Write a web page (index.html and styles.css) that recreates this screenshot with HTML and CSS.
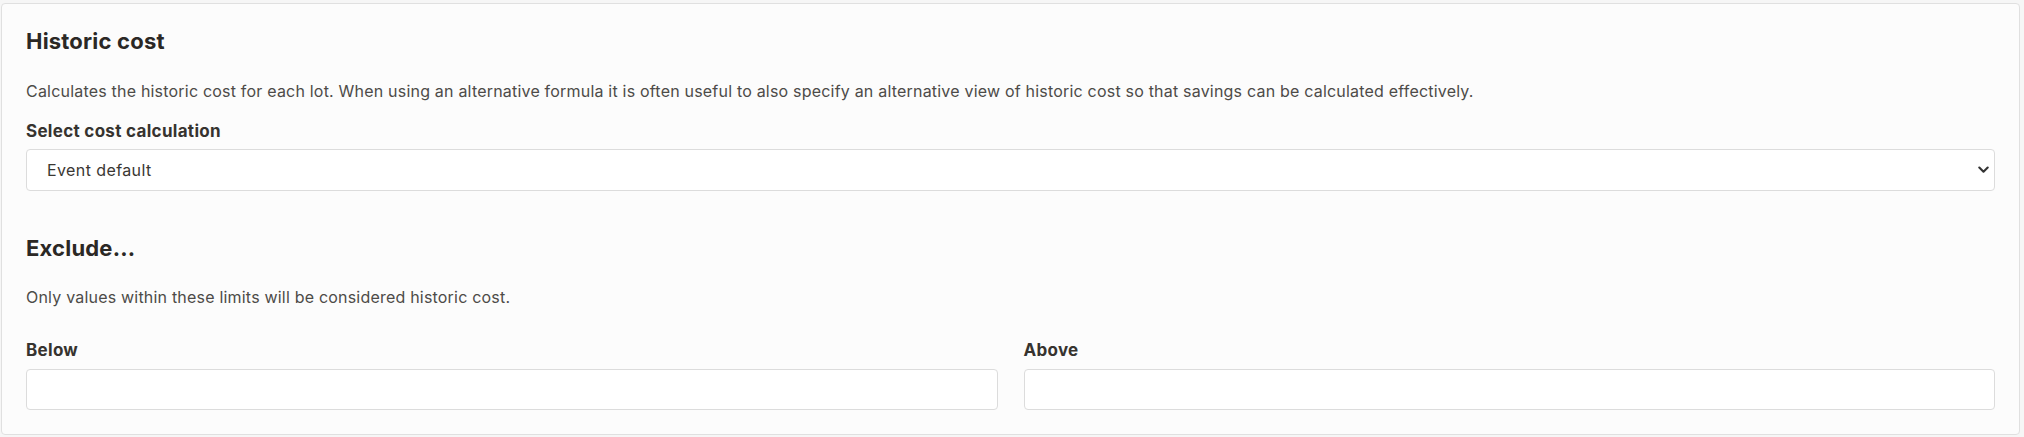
FILE: index.html
```html
<!DOCTYPE html>
<html lang="en">
<head>
<meta charset="utf-8">
<title>Historic cost</title>
<link rel="stylesheet" href="styles.css">
</head>
<body>
<section class="card">
  <h2 class="title">Historic cost</h2>
  <p class="desc">Calculates the historic cost for each lot. When using an alternative formula it is often useful to also specify an alternative view of historic cost so that savings can be calculated effectively.</p>
  <label class="label" for="calc">Select cost calculation</label>
  <div class="select-wrap">
    <select id="calc" class="select">
      <option>Event default</option>
    </select>
    <svg class="chevron" width="11" height="8" viewBox="0 0 11 8" aria-hidden="true"><path d="M1.3 1.5 L5.5 5.7 L9.7 1.5" fill="none" stroke="#333" stroke-width="2.1" stroke-linecap="round" stroke-linejoin="round"/></svg>
  </div>
  <h2 class="title title-exclude">Exclude...</h2>
  <p class="desc desc-exclude">Only values within these limits will be considered historic cost.</p>
  <div class="limits">
    <div class="field">
      <label class="label" for="below">Below</label>
      <input id="below" class="input" type="text">
    </div>
    <div class="field">
      <label class="label" for="above">Above</label>
      <input id="above" class="input" type="text">
    </div>
  </div>
</section>
</body>
</html>
```

FILE: styles.css
```css
html, body {
  margin: 0;
  background: #f6f6f6;
}
body {
  padding: 3px 4px 0 1px;
  font-family: Inter, "Noto Sans", sans-serif;
  color: #2d2a26;
  letter-spacing: 0.2px;
}
.card {
  background: #fcfcfc;
  border: 1px solid #e0e0e0;
  border-radius: 4px;
  padding: 24px 24px 25px 24px;
  height: 381px;
}
.title {
  margin: 0 0 25px 0;
  font-size: 22px;
  line-height: 26px;
  font-weight: 700;
  color: #2b2825;
}
.desc {
  margin: 0 0 16px 0;
  font-size: 16px;
  line-height: 24px;
  color: #4d4b48;
}
.label {
  display: block;
  margin: 0 0 6px 0;
  font-size: 17px;
  line-height: 24px;
  font-weight: 700;
  letter-spacing: 0.3px;
  color: #36332f;
}
.select-wrap {
  position: relative;
}
.select {
  display: block;
  width: 100%;
  height: 42px;
  box-sizing: border-box;
  appearance: none;
  -webkit-appearance: none;
  background: #fff;
  border: 1px solid #dcdcdc;
  border-radius: 4px;
  padding: 0 40px 0 20px;
  font-family: Inter, "Noto Sans", sans-serif;
  font-size: 16px;
  letter-spacing: 0.4px;
  color: #3a3733;
  margin: 0;
}
.chevron {
  position: absolute;
  right: 6px;
  top: 17px;
}
.title-exclude {
  margin-top: 44px;
  margin-bottom: 24px;
}
.desc-exclude {
  margin-bottom: 29px;
}
.limits {
  display: grid;
  grid-template-columns: 1fr 1fr;
  column-gap: 26px;
}
.field .label {
  margin-bottom: 7px;
}
.input {
  display: block;
  width: 100%;
  height: 41px;
  box-sizing: border-box;
  background: #fff;
  border: 1px solid #dcdcdc;
  border-radius: 4px;
  margin: 0;
  padding: 0 12px;
  font-family: Inter, "Noto Sans", sans-serif;
  font-size: 16px;
}
```
